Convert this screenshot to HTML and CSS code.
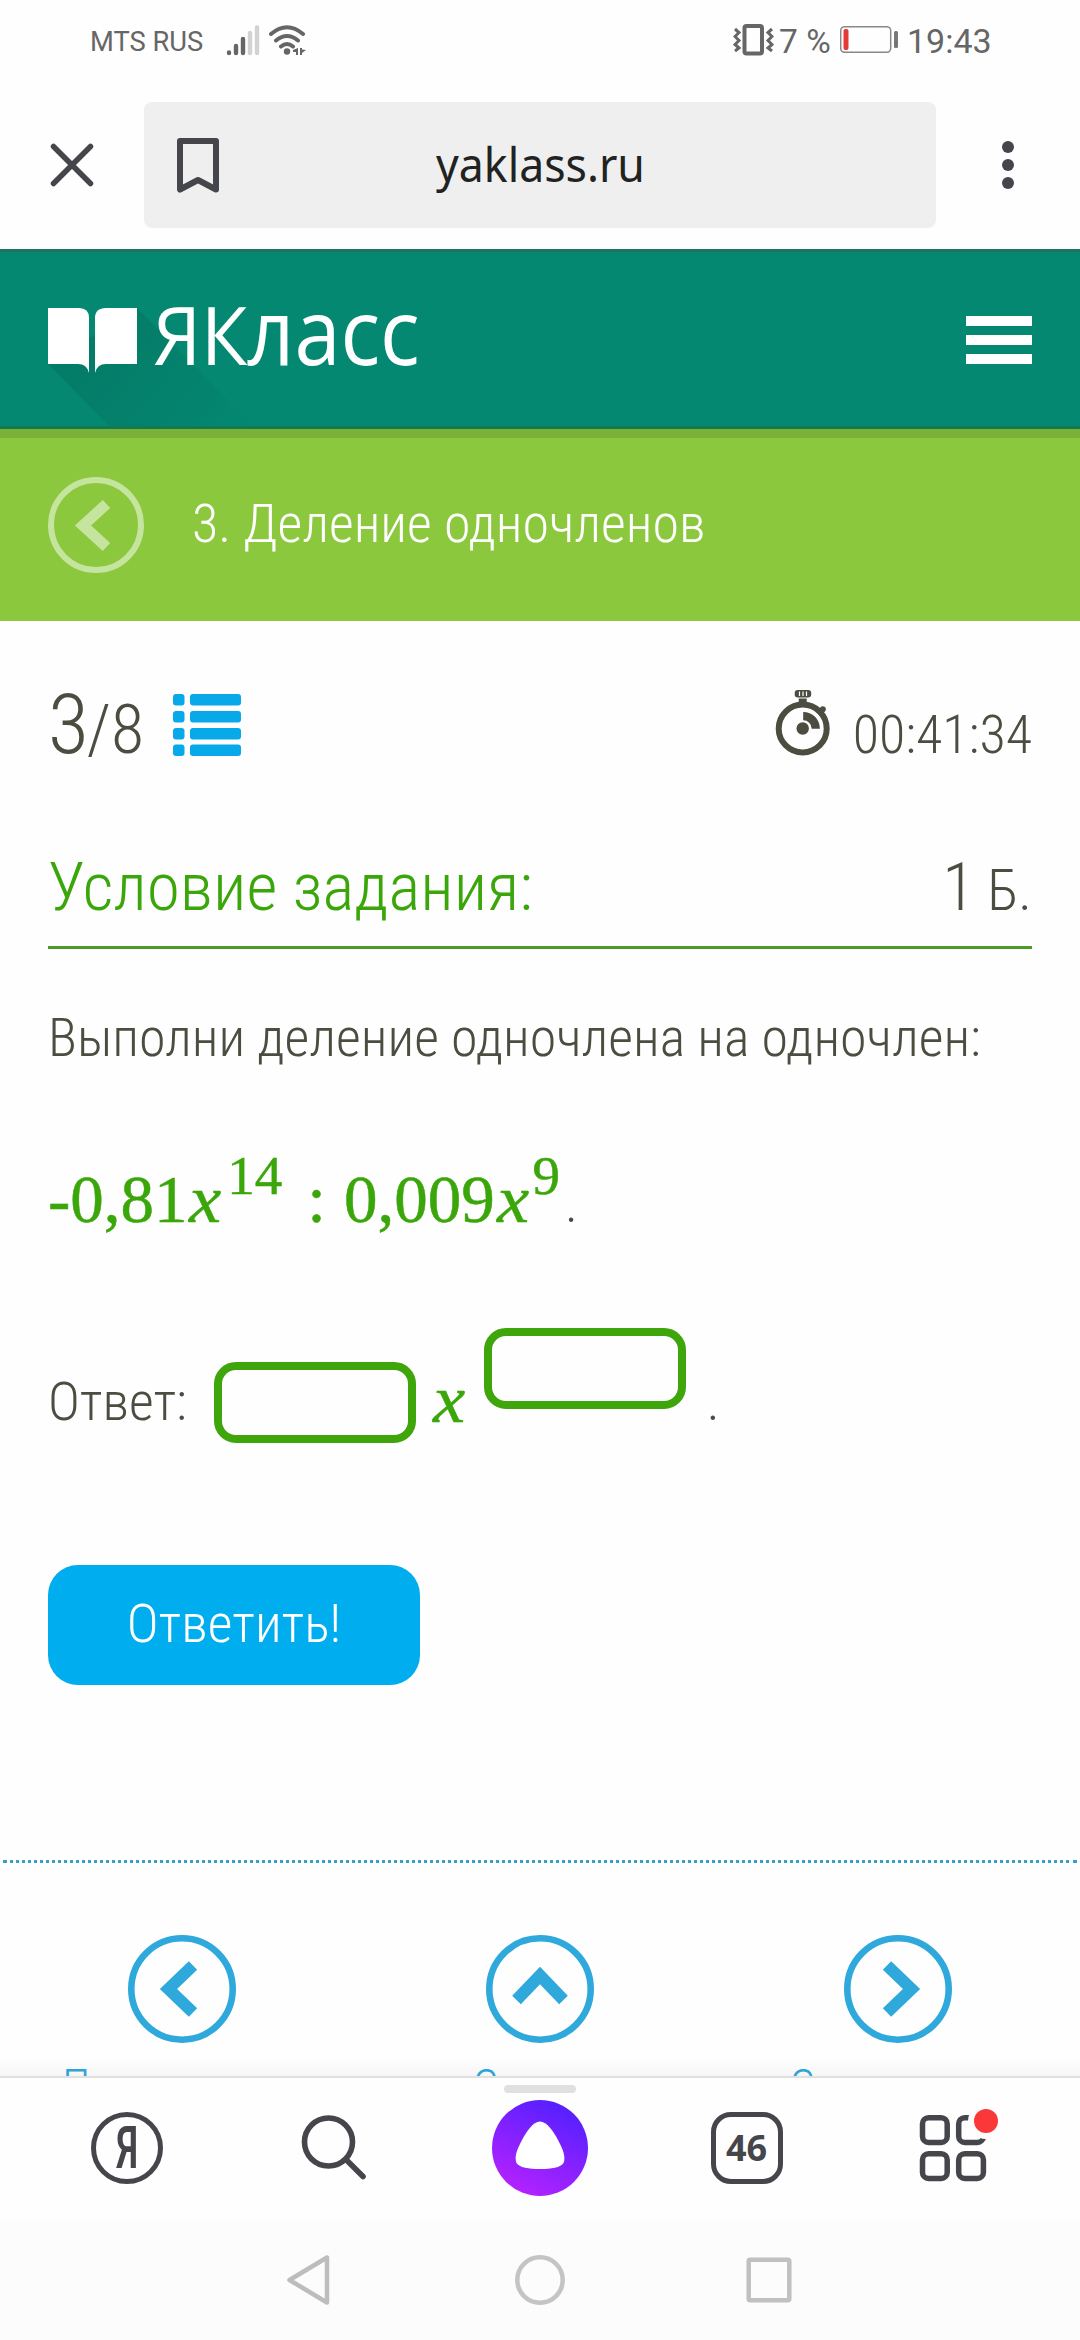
FILE: index.html
```html
<!DOCTYPE html>
<html lang="ru">
<head>
<meta charset="utf-8">
<title>ЯКласс</title>
<link rel="stylesheet" href="styles.css">
</head>
<body>
<div class="screen">
  <div class="status">
    <span class="carrier">MTS RUS</span>
    <svg class="signal" width="80" height="32" viewBox="226 24 80 32">
      <g stroke-width="4.4" stroke-linecap="round" fill="none">
        <path stroke="#666" d="M229 52.5v.6M236 46v7M243 39v14"/>
        <path stroke="#d2d2d2" d="M250 33v20M257 27.5v25.5"/>
      </g>
      <g fill="none" stroke="#666" stroke-width="4" stroke-linecap="round">
        <path d="M271 34q16-13.500 32 0M276 40.500q11-9 22 0M281 46.500q6-5 12 0"/>
      </g>
      <circle cx="287" cy="51.500" r="3.200" fill="#666"/>
      <path fill="#666" d="M298 48v7h-2v-3h-3v-2zM300 48h2v1.500l4 .5-4 3v2h-2z"/>
    </svg>
    <span class="grow"></span>
    <svg class="vibrate" width="41" height="32" viewBox="733 24 41 32" fill="none" stroke="#666">
      <rect x="744.500" y="26" width="17.500" height="27.500" rx="2" stroke-width="4"/>
      <path stroke-width="3" d="M735 29l4 3.500-4 4 4 4-4 4 4 3.500-4 3M772 29l-4 3.500 4 4-4 4 4 4-4 3.500 4 3"/>
    </svg>
    <span class="percent">7 %</span>
    <svg class="battery" width="59" height="28" viewBox="840 27 59 28">
      <rect x="840.700" y="27.700" width="50" height="25.600" rx="4" fill="none" stroke="#888" stroke-width="1.500"/>
      <rect x="843.500" y="30" width="5" height="21" rx="2" fill="#e53935"/>
      <rect x="894" y="32" width="4" height="17" rx="1.500" fill="#777"/>
    </svg>
    <span class="clock">19:43</span>
  </div>

  <div class="browser">
    <svg class="close" width="44" height="44" viewBox="0 0 44 44"><path d="M3.500 3.500l37 37M40.500 3.500l-37 37" stroke="#45464b" stroke-width="5.500" stroke-linecap="round"/></svg>
    <div class="address">
      <svg class="bookmark" width="42" height="55" viewBox="0 0 42 55"><path d="M3 3h36v48.500L21 42 3 51.500z" fill="none" stroke="#45464b" stroke-width="6" stroke-linejoin="round"/></svg>
      <span class="domain">yaklass.ru</span>
    </div>
    <svg class="dots" width="12" height="50" viewBox="0 0 12 50" fill="#45464b"><circle cx="6" cy="7" r="6"/><circle cx="6" cy="25" r="6"/><circle cx="6" cy="43" r="6"/></svg>
  </div>

  <div class="page">
    <div class="site-head">
      <svg class="book" width="220" height="174" viewBox="48 252 220 174">
        <defs><linearGradient id="sh" gradientUnits="userSpaceOnUse" x1="100" y1="340" x2="220" y2="440"><stop offset="0" stop-color="#045c4c" stop-opacity=".28"/><stop offset="1" stop-color="#045c4c" stop-opacity=".03"/></linearGradient></defs>
        <path fill="url(#sh)" d="M48 364l64 65h145L137 308z"/>
        <path fill="#fff" d="M48 308h31q10 0 10 10v55q-2-9-11-9H48zM137 308h-31q-11 0-11 10v55q2-9 11-9h31z"/>
      </svg>
      <span class="brand"><span class="brand-cap">ЯК</span><span class="brand-low">ласс</span></span>
      <span class="burger"><i></i><i></i><i></i></span>
    </div>
    <div class="topic">
      <svg class="back" width="96" height="96" viewBox="0 0 96 96" fill="none" stroke="#c5e49e"><circle cx="48" cy="48" r="45" stroke-width="6"/><path d="M58.500 27L35 48.500 58.500 70" stroke-width="11"/></svg>
      <span class="topic-name">3. Деление одночленов</span>
    </div>

    <div class="content">
      <div class="score-row">
        <span class="num">3</span><span class="total">/8</span>
        <svg class="list" width="68" height="62" viewBox="0 0 68 62" fill="#08a9e9">
          <rect width="11.500" height="11.500" rx="3"/><rect x="17" width="51" height="11.500" rx="3"/>
          <rect y="17" width="11.500" height="11.500" rx="3"/><rect x="17" y="17" width="51" height="11.500" rx="3"/>
          <rect y="34" width="11.500" height="11.500" rx="3"/><rect x="17" y="34" width="51" height="11.500" rx="3"/>
          <rect y="50.500" width="11.500" height="11.500" rx="3"/><rect x="17" y="50.500" width="51" height="11.500" rx="3"/>
        </svg>
        <span class="grow"></span>
        <svg class="watch" width="56" height="66" viewBox="775 690 56 66">
          <circle cx="802.700" cy="728.500" r="24" fill="none" stroke="#4c4d40" stroke-width="6"/>
          <rect x="794.700" y="690" width="16.500" height="7.500" rx="3" fill="#4c4d40"/>
          <path d="M799.500 691.500v4.500M803 691.500v4.500M806.500 691.500v4.500" stroke="#fff" stroke-width="1.200"/>
          <path d="M798.700 698.500h8v6h-8z" fill="#4c4d40"/>
          <path d="M818.500 714l4-4.500" stroke="#4c4d40" stroke-width="5"/>
          <circle cx="822.800" cy="709.300" r="3" fill="#4c4d40"/>
          <circle cx="802.700" cy="728.500" r="6.200" fill="#4c4d40"/>
          <path d="M803.200 712a16.500 16.500 0 0 1 16.700 16.700h-8.200a8.500 8.500 0 0 0-8.500-8.500z" fill="#4c4d40"/>
        </svg>
        <span class="time">00:41:34</span>
      </div>

      <div class="task-head">
        <span class="task-title">Условие задания:</span>
        <span class="grow"></span>
        <span class="pts">1</span><span class="pts-unit">Б.</span>
      </div>

      <p class="task-text">Выполни деление одночлена на одночлен:</p>

      <div class="formula"><span class="coef1">-0,81</span><i class="x1">x</i><span class="sup s1">14</span><span class="colon">:</span><span class="coef2">0,009</span><i class="x2">x</i><span class="sup s2">9</span><span class="stop">.</span></div>

      <div class="answer">
        <span class="answer-label">Ответ:</span>
        <span class="field field-coef"></span>
        <i class="answer-x">x</i>
        <span class="field field-exp"></span>
        <span class="answer-stop">.</span>
      </div>

      <div class="submit"><span class="submit-text">Ответить!</span></div>
    </div>

    <div class="pager">
      <div class="pager-item">
        <svg width="108" height="108" viewBox="0 0 108 108" fill="none" stroke="#2fa8dc"><circle cx="54" cy="54" r="50.700" stroke-width="6.600"/><path d="M65 30.500L40.500 54 65 77.500" stroke-width="12"/></svg>
        <span>Предыдущее</span>
      </div>
      <div class="pager-item">
        <svg width="108" height="108" viewBox="0 0 108 108" fill="none" stroke="#2fa8dc"><circle cx="54" cy="54" r="50.700" stroke-width="6.600"/><path d="M30.500 65L54 40.500 77.500 65" stroke-width="12"/></svg>
        <span>Список</span>
      </div>
      <div class="pager-item">
        <svg width="108" height="108" viewBox="0 0 108 108" fill="none" stroke="#2fa8dc"><circle cx="54" cy="54" r="50.700" stroke-width="6.600"/><path d="M43 30.500L67.500 54 43 77.500" stroke-width="12"/></svg>
        <span>Следующее</span>
      </div>
    </div>
    <div class="fade"></div>
  </div>

  <div class="tabs">
    <div class="handle"></div>
    <div class="tab tab-ya"><span class="ya-ring"><b>Я</b></span></div>
    <div class="tab"><svg width="76" height="72" viewBox="295.500 2112 76 72" fill="none" stroke="#45464b" stroke-width="5.600"><circle cx="328" cy="2142" r="24"/><path d="M345.500 2159.500l17 17" stroke-linecap="round"/></svg></div>
    <div class="tab"><svg width="96" height="96" viewBox="0 0 96 96"><defs><linearGradient id="al" x1=".75" y1="0" x2=".25" y2="1"><stop offset="0" stop-color="#5020ff"/><stop offset="1" stop-color="#b822ff"/></linearGradient></defs><circle cx="48" cy="48" r="48" fill="url(#al)"/><path fill="#fff" d="M48 21.500C55 21.500 61 31 66 40C71 49.500 74 57 71.500 63C69 67.500 59 69 48 69S27 67.500 24.500 63C22 57 25 49.500 30 40C35 31 41 21.500 48 21.500z"/></svg></div>
    <div class="tab"><span class="count">46</span></div>
    <div class="tab"><svg width="92" height="90" viewBox="907 2103 92 90"><g fill="none" stroke="#45464b" stroke-width="5.500"><rect x="922.500" y="2117.700" width="24.700" height="24.700" rx="6"/><rect x="958.700" y="2117.700" width="24.700" height="24.700" rx="6"/><rect x="922.500" y="2153.700" width="24.700" height="24.700" rx="6"/><rect x="958.700" y="2153.700" width="24.700" height="24.700" rx="6"/></g><circle cx="986" cy="2121" r="18" fill="#fefefe"/><circle cx="986" cy="2121" r="12" fill="#fb3838"/></svg></div>
  </div>

  <div class="sysnav">
    <svg width="44" height="52" viewBox="286 2254 44 52" fill="none" stroke="#bdbdbd" stroke-width="4.500" stroke-linejoin="round"><path d="M327 2257.500v45L289.500 2280z"/></svg>
    <svg width="52" height="52" viewBox="0 0 52 52" fill="none" stroke="#c4c4c4" stroke-width="4.500"><circle cx="26" cy="26" r="22.700"/></svg>
    <svg width="46" height="46" viewBox="0 0 46 46" fill="none" stroke="#c0c0c0" stroke-width="4.500"><rect x="2.700" y="2.700" width="40.600" height="40.600" rx="1.500"/></svg>
  </div>
</div>
</body>
</html>
```
FILE: styles.css
```css
* { box-sizing: border-box; }
body { margin: 0; background: #fefefe; }
.screen {
  display: flex; flex-direction: column;
  width: 1080px; height: 2340px; overflow: hidden;
  font-family: "Roboto Condensed", Roboto, sans-serif;
  font-stretch: 75%; font-weight: 300; color: #4c4d40;
  white-space: nowrap;
}
.screen span { flex: none; }
.screen svg { flex: none; display: block; }
.screen .grow { flex: 1; }

.status { display: flex; align-items: center; height: 82px; padding: 0 90px 2px 90px; font-family: Roboto, sans-serif; font-stretch: 100%; font-weight: 400; color: #666; }
.carrier { font-size: 27.300px; width: 136px; padding-top: 4px; }
.percent { font-size: 33.500px; width: 66px; padding-left: 5px; padding-top: 2px; }
.clock { font-size: 34px; width: 91px; padding-left: 8px; padding-top: 2px; }

.browser { display: flex; align-items: center; height: 167px; padding: 0 66px 1px 50px; }
.address { display: flex; align-items: center; width: 792px; height: 126px; margin-left: 50px; border-radius: 8px; background: #efefef; padding-left: 33px; }
.domain { font-family: "Noto Sans", sans-serif; font-stretch: 100%; font-weight: 400; font-size: 48px; line-height: 66px; color: #222; margin-left: 217px; padding-bottom: 2px; transform: scaleX(.93); transform-origin: left; }
.dots { margin-left: 66px; }

.page { position: relative; height: 1827px; overflow: hidden; display: flex; flex-direction: column; }
.site-head { display: flex; flex: none; height: 180px; padding: 0 48px; background: #048872; border-top: 3px solid #1d7462; border-bottom: 3px solid #117a54; align-items: center; }
.brand { font-family: "Open Sans", sans-serif; font-stretch: 100%; font-weight: 500; color: #fff; margin-left: -115px; padding-bottom: 14px; display: flex; align-items: baseline; }
.brand-cap { font-size: 80px; line-height: 110px; transform: scaleX(.95); transform-origin: left; }
.brand-low { font-size: 92px; line-height: 110px; transform: scaleX(.9); transform-origin: left; margin-left: -5px; font-weight: 500; }
.burger { display: flex; flex-direction: column; gap: 9px; margin-left: auto; padding-top: 2px; }
.burger i { width: 66px; height: 10px; background: #fff; }

.topic { display: flex; flex: none; align-items: center; height: 192px; padding: 0 48px 9px; background: #8bc83e; border-top: 9px solid #7bb136; }
.topic-name { font-size: 54px; line-height: 70px; color: #fff; margin-left: 48px; padding-bottom: 2px; }

.content { padding: 54px 48px 0; display: flex; flex-direction: column; flex: none; }
.score-row { display: flex; align-items: flex-start; height: 100px; }
.num { font-size: 84px; line-height: 100px; }
.total { font-size: 68px; line-height: 110px; margin-left: -2px; }
.list { margin: 19px 0 0 29px; }
.watch { margin-top: 15px; }
.time { font-size: 54px; line-height: 120px; margin-left: 22px; }

.task-head { display: flex; align-items: baseline; height: 107px; margin-top: 67px; border-bottom: 3px solid #4a9c28; }
.task-title { font-size: 67.500px; line-height: 90px; color: #3ba60a; }
.pts { font-size: 67.500px; line-height: 90px; }
.pts-unit { font-size: 57px; margin-left: 12px; }
.task-text { margin: 54px 0 0; font-size: 54px; line-height: 70px; }

.formula { margin-top: 86px; height: 80px; font-family: "Liberation Serif", serif; font-size: 67px; line-height: 80px; font-weight: 400; color: #3ba60a; -webkit-text-stroke: .5px #3ba60a; }
.sup { font-size: 55px; line-height: 0; vertical-align: 28px; }
.x1, .x2 { display: inline-block; transform: scaleX(1.08); transform-origin: left; }
.x1 { margin-left: 1px; }
.s1 { margin-left: 9px; }
.x2 { margin-left: 2px; }
.s2 { margin-left: 6px; }
.colon { margin: 0 18px 0 25px; }
.stop { font-family: "Roboto Condensed", Roboto, sans-serif; font-size: 54px; line-height: 0; color: #4c4d40; font-weight: 300; margin-left: 5px; -webkit-text-stroke: 0; }

.answer { display: flex; margin-top: 89px; height: 115px; align-items: flex-start; }
.answer-label, .answer-stop { font-size: 54px; line-height: 70px; margin-top: 39px; }
.field { width: 202px; height: 81px; border: 8px solid #3ea50a; border-radius: 22px; background: #fefefe; }
.field-coef { align-self: flex-end; margin-left: 27px; }
.answer-x { font-family: "Liberation Serif", serif; font-size: 67px; line-height: 80px; margin-top: 31px; font-weight: 400; color: #3ba60a; margin-left: 17px; -webkit-text-stroke: .5px #3ba60a; transform: scaleX(1.08); transform-origin: left; }
.field-exp { margin-left: 21px; }
.answer-stop { margin-left: 21px; }

.submit { width: 372px; height: 120px; margin-top: 122px; border-radius: 30px; background: #00adee; color: #fff; display: flex; align-items: center; justify-content: center; }
.submit-text { font-size: 54px; line-height: 70px; padding-bottom: 2px; }

.pager { flex: none; display: grid; grid-template-columns: repeat(3, 358px); margin: 175px 3px 0; border-top: 3px dotted #3a9fc4; padding-top: 72px; color: #2fa8dc; }
.pager-item { display: flex; flex-direction: column; align-items: center; }
.pager-item span { font-size: 45.500px; line-height: 56px; margin-top: 16px; }
.fade { position: absolute; left: 0; right: 0; bottom: 0; height: 18px; background: linear-gradient(rgba(0,0,0,0), rgba(0,0,0,.03)); }

.tabs { position: relative; display: grid; grid-template-columns: repeat(5, 206.500px); justify-content: center; height: 144px; border-top: 2px solid #e0e0e0; padding-bottom: 2px; }
.tab { display: flex; align-items: center; justify-content: center; }
.handle { position: absolute; left: 504px; top: 7px; width: 72px; height: 8px; border-radius: 4px; background: #e0e0e0; }
.ya-ring { width: 72px; height: 72px; border: 5.500px solid #45464b; border-radius: 50%; display: flex; align-items: center; justify-content: center; color: #45464b; }
.ya-ring b { font-weight: 500; font-size: 60px; line-height: 60px; transform: scaleX(.72); }
.count { width: 72px; height: 72px; border: 5.500px solid #45464b; border-radius: 20px; display: flex; align-items: center; justify-content: center; color: #45464b; font: 700 36px/40px "Noto Sans", sans-serif; }
.sysnav { height: 120px; background: #fcfcfc; display: flex; align-items: center; padding-left: 286px; }
.sysnav svg:nth-child(2) { margin-left: 184px; }
.sysnav svg:nth-child(3) { margin-left: 180px; }
```
